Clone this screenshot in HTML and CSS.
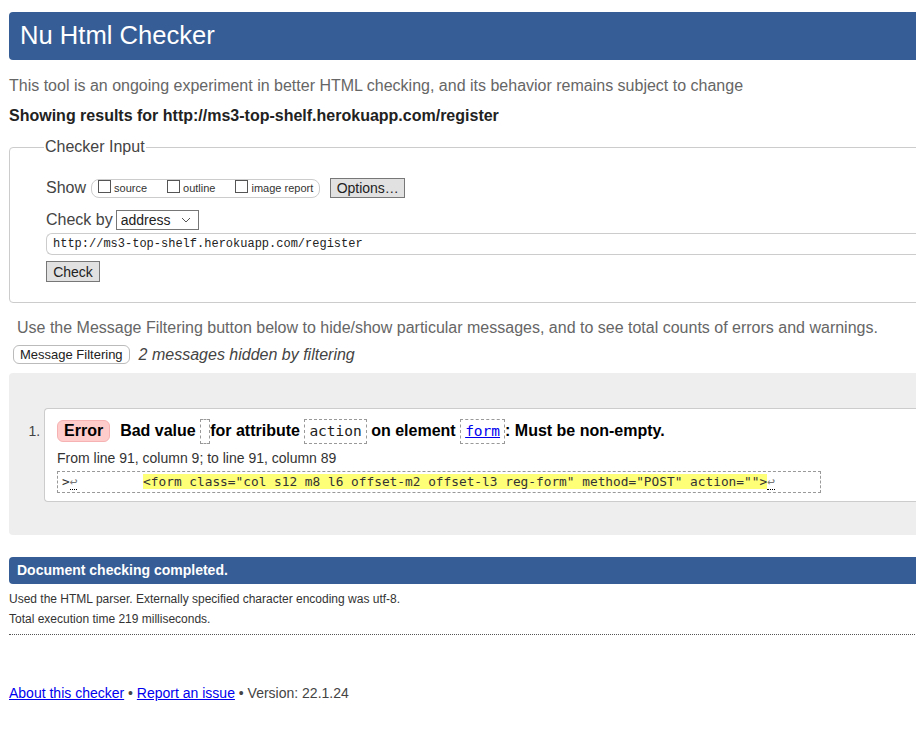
FILE: index.html
```html
<!DOCTYPE html>
<html lang="en">
<head>
<meta charset="utf-8">
<title>Showing results for http://ms3-top-shelf.herokuapp.com/register - Nu Html Checker</title>
<link rel="stylesheet" href="styles.css">
</head>
<body>
<div class="header"><h1>Nu Html Checker</h1></div>
<p class="intro">This tool is an ongoing experiment in better HTML checking, and its behavior remains subject to change</p>
<p class="showing">Showing results for http://ms3-top-shelf.herokuapp.com/register</p>

<form class="checker">
  <fieldset class="box">
    <legend class="legend">Checker Input</legend>
    <div class="row show-row">
      <span class="lbl">Show</span>
      <span class="pill">
        <label class="opt"><input type="checkbox" class="cb">source</label>
        <label class="opt"><input type="checkbox" class="cb">outline</label>
        <label class="opt"><input type="checkbox" class="cb">image report</label>
      </span>
      <button type="button" class="btn options">Options…</button>
    </div>
    <div class="row by-row">
      <span class="lbl">Check by</span>
      <select class="sel"><option>address</option></select>
    </div>
    <div class="url">http://ms3-top-shelf.herokuapp.com/register</div>
    <button type="button" class="btn check">Check</button>
  </fieldset>
</form>

<p class="filter-note">Use the Message Filtering button below to hide/show particular messages, and to see total counts of errors and warnings.</p>
<div class="filter-row">
  <button type="button" class="filter-btn">Message Filtering</button>
  <em class="hidden-note">2 messages hidden by filtering</em>
</div>

<div class="results">
  <ol class="msgs">
    <li class="msg">
      <p class="msg-line"><strong class="badge">Error</strong><span class="msg-text">Bad value <code class="c empty"></code>for attribute <code class="c">action</code> on element <code class="c"><a href="#" class="elink">form</a></code>: Must be non-empty.</span></p>
      <p class="loc">From line 91, column 9; to line 91, column 89</p>
      <p class="extract"><code class="ex">&gt;<b class="lf">↩</b>        <b class="hl">&lt;form class="col s12 m8 l6 offset-m2 offset-l3 reg-form" method="POST" action=""&gt;</b><b class="lf">↩</b></code></p>
    </li>
  </ol>
</div>

<div class="done">Document checking completed.</div>
<p class="det">Used the HTML parser. Externally specified character encoding was utf-8.</p>
<p class="det">Total execution time 219 milliseconds.</p>
<hr class="dots">

<p class="footer"><a href="#">About this checker</a> • <a href="#">Report an issue</a> • Version: 22.1.24</p>
</body>
</html>
```

FILE: styles.css
```css
html { overflow: hidden; }
body {
  margin: 0;
  padding: 12px 0 0 9px;
  width: 960px;
  font-family: "Liberation Sans", Arial, sans-serif;
  color: #222;
  background: #fff;
}
.header {
  background: #365d95;
  color: #fff;
  height: 48px;
  border-radius: 4px;
  display: flex;
  align-items: center;
  padding-left: 11px;
}
.header h1 { margin: 0; font-size: 25.6px; font-weight: normal; line-height: 1; }
.intro { margin: 17px 0 0; font-size: 16px; line-height: 18px; color: #666; }
.showing { margin: 12px 0 0; font-size: 16px; line-height: 18px; font-weight: bold; color: #222; }

.checker { margin: 13px 0 0; }
.box {
  margin: 0;
  border: 1px solid #ccc;
  border-radius: 4px;
  padding: 11px 0 20px 36px;
}
.legend { font-size: 16px; color: #444; padding: 0 1px; margin-left: -2px; line-height: 18px; }
.row { display: flex; align-items: center; }
.lbl { font-size: 16px; color: #444; line-height: 18px; }
.show-row { margin-top: 11px; }
.pill {
  display: inline-flex;
  align-items: center;
  margin-left: 5px;
  height: 17px;
  border: 1px solid #ccc;
  border-radius: 8px;
  padding: 0 6px 0 6px;
}
.opt { display: inline-flex; align-items: center; font-size: 11px; color: #333; margin-right: 20px; }
.opt:last-child { margin-right: 0; }
.cb {
  appearance: none;
  -webkit-appearance: none;
  width: 13px;
  height: 13px;
  margin: 0 3px 0 0;
  border: 1px solid #555;
  border-radius: 0;
  background: #fff;
  position: relative;
  top: -2px;
}
.btn {
  font-family: "Liberation Sans", Arial, sans-serif;
  font-size: 14px;
  color: #222;
  background: #e1e1e1;
  border: 1px solid #777;
  border-radius: 0;
  padding: 0;
  height: 21px;
}
.options { margin-left: 10px; width: 75px; height: 20px; }
.by-row { margin-top: 12px; }
.sel {
  appearance: none;
  -webkit-appearance: none;
  margin-left: 3px;
  width: 83px;
  height: 20px;
  font-family: "Liberation Sans", Arial, sans-serif;
  font-size: 14px;
  color: #222;
  border: 1px solid #767676;
  border-radius: 0;
  padding: 0 0 0 4px;
  background: #fff url("data:image/svg+xml,%3Csvg xmlns='http://www.w3.org/2000/svg' width='10' height='6' viewBox='0 0 10 6'%3E%3Cpath d='M1 1l4 4 4-4' fill='none' stroke='%23555' stroke-width='1'/%3E%3C/svg%3E") no-repeat right 7px center;
}
.url {
  margin-top: 3px;
  height: 20px;
  border: 1px solid #ccc;
  border-right: 0;
  border-radius: 6px 0 0 6px;
  padding-left: 6px;
  font-family: "Liberation Mono", "Courier New", monospace;
  font-size: 12px;
  line-height: 20px;
  color: #222;
}
.check { display: block; margin-top: 6px; width: 54px; }

.filter-note { margin: 16px 0 0 8px; font-size: 16px; line-height: 18px; color: #666; }
.filter-row { display: flex; align-items: center; margin: 8px 0 0 4px; }
.filter-btn {
  font-family: "Liberation Sans", Arial, sans-serif;
  font-size: 13px;
  color: #222;
  background: #fff;
  border: 1px solid #bbb;
  border-radius: 6px;
  height: 19px;
  padding: 0 6px;
}
.hidden-note { margin-left: 9px; font-size: 16px; color: #444; }

.results {
  margin-top: 9px;
  background: #eee;
  border-radius: 4px;
  padding: 35px 0 33px;
}
.msgs { margin: 0; padding: 0 0 0 35px; }
.msg {
  background: #fff;
  border: 1px solid #ccc;
  border-right: 0;
  border-radius: 4px 0 0 4px;
  padding: 9px 0 8px 12px;
  color: #444;
  font-size: 14px;
}
.msg::marker { color: #444; font-size: 14px; }
.msg-line { margin: 0; display: flex; align-items: center; color: #000; font-size: 16px; font-weight: bold; height: 26px; }
.badge {
  background: #fcc;
  border: 1px solid #f6b2b2;
  border-radius: 6px;
  padding: 1px 6px;
  line-height: 18px;
  margin-right: 10px;
}
.c {
  display: inline-block;
  font-family: "DejaVu Sans Mono", "Liberation Mono", monospace;
  font-weight: normal;
  font-size: 14.5px;
  border: 1px dashed #999;
  padding: 1px 4px;
  line-height: 21px;
  vertical-align: middle;
  color: #222;
}
.c.empty { width: 2px; padding: 1px 3px; height: 21px; }
.elink { color: #00e; }
.loc { margin: 6px 0 0; font-size: 14px; line-height: 16px; color: #333; }
.extract { margin: 5px 0 0; }
.ex {
  display: inline-block;
  width: 764px;
  box-sizing: border-box;
  border: 1px dashed #999;
  padding: 1px 4px 2px;
  font-family: "DejaVu Sans Mono", "Liberation Mono", monospace;
  font-size: 12.8px;
  line-height: 17px;
  white-space: pre;
  color: #333;
}
.ex b { font-weight: normal; }
.hl { background: #ff7; color: #333; margin-left: 4px; }
.lf { border-bottom: 1px dotted #000; color: #777; }

.done {
  margin-top: 22px;
  height: 27px;
  background: #365d95;
  color: #fff;
  font-weight: bold;
  font-size: 14px;
  line-height: 27px;
  padding-left: 8px;
  border-radius: 4px;
}
.det { margin: 0; font-size: 12px; line-height: 20px; color: #333; }
.done + .det { margin-top: 5px; }
.dots { margin: 5px 0 0; border: 0; border-top: 1px dotted #555; width: 906px; }
.footer { margin: 50px 0 0; font-size: 14px; color: #444; }
.footer a { color: #00e; }
```
